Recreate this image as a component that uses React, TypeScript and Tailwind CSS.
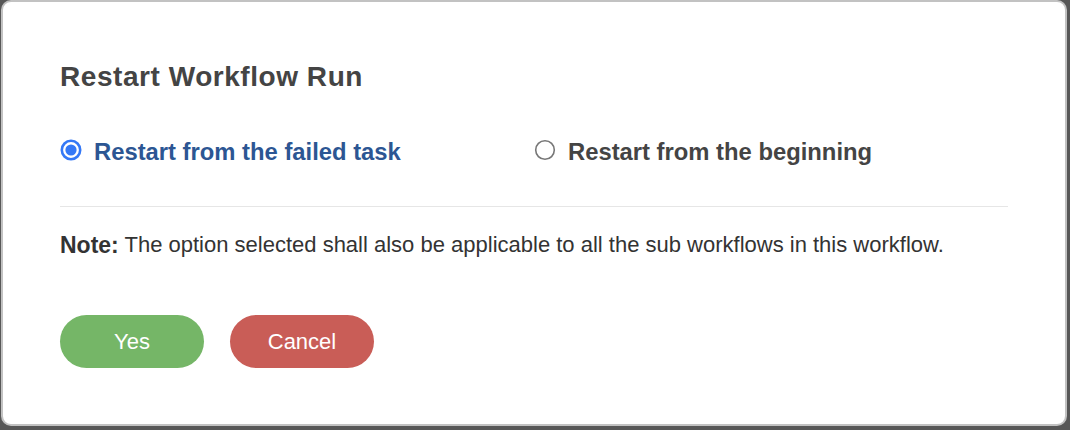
import React, { useState } from "react";

type Choice = "failed" | "beginning";

function Radio({ checked }: { checked: boolean }) {
  return (
    <svg width="22" height="22" viewBox="0 0 22 22" className="shrink-0">
      {checked ? (
        <>
          <circle cx="11" cy="11" r="9.2" fill="white" stroke="#3478f6" strokeWidth="2.6" />
          <circle cx="11" cy="11" r="5.6" fill="#3478f6" />
        </>
      ) : (
        <circle cx="11" cy="11" r="9.3" fill="white" stroke="#777777" strokeWidth="1.6" />
      )}
    </svg>
  );
}

export default function App() {
  const [choice, setChoice] = useState<Choice>("failed");

  const options: { id: Choice; label: string }[] = [
    { id: "failed", label: "Restart from the failed task" },
    { id: "beginning", label: "Restart from the beginning" },
  ];

  return (
    <div className="w-[1070px] h-[430px] bg-[#575757] overflow-hidden font-['Liberation_Sans',Arial,sans-serif]">
      {/* Modal */}
      <div className="ml-[1px] w-[1066px] h-[426px] bg-white border-2 border-[#c2c2c2] rounded-[10px] px-[57px] pt-[59px]">
        <h2 className="text-[28px] leading-[32px] font-bold text-[#444444] tracking-[0.55px]">
          Restart Workflow Run
        </h2>

        <div className="grid grid-cols-2 mt-[45px] h-[28px]">
          {options.map((o) => {
            const active = choice === o.id;
            return (
              <label
                key={o.id}
                onClick={() => setChoice(o.id)}
                className="flex items-start cursor-pointer"
              >
                <span className="mt-[1px]">
                  <Radio checked={active} />
                </span>
                <span
                  className={`ml-[12px] text-[23.8px] leading-[28px] font-bold ${
                    active ? "text-[#2c5693]" : "text-[#444444]"
                  }`}
                >
                  {o.label}
                </span>
              </label>
            );
          })}
        </div>

        <div className="mt-[40px] h-px bg-[#e6e6e6]" />

        <p className="mt-[24px] text-[22px] leading-[26px] text-[#333333]">
          <span className="font-bold text-[23px] relative top-[1px]">Note:</span>{" "}
          The option selected shall also be applicable to all the sub workflows in this workflow.
        </p>

        <div className="flex gap-[26px] mt-[57px]">
          <button className="w-[144px] h-[53px] rounded-full bg-[#75b667] text-white text-[22px]">
            Yes
          </button>
          <button className="w-[144px] h-[53px] rounded-full bg-[#c95d57] text-white text-[22px]">
            Cancel
          </button>
        </div>
      </div>
    </div>
  );
}
